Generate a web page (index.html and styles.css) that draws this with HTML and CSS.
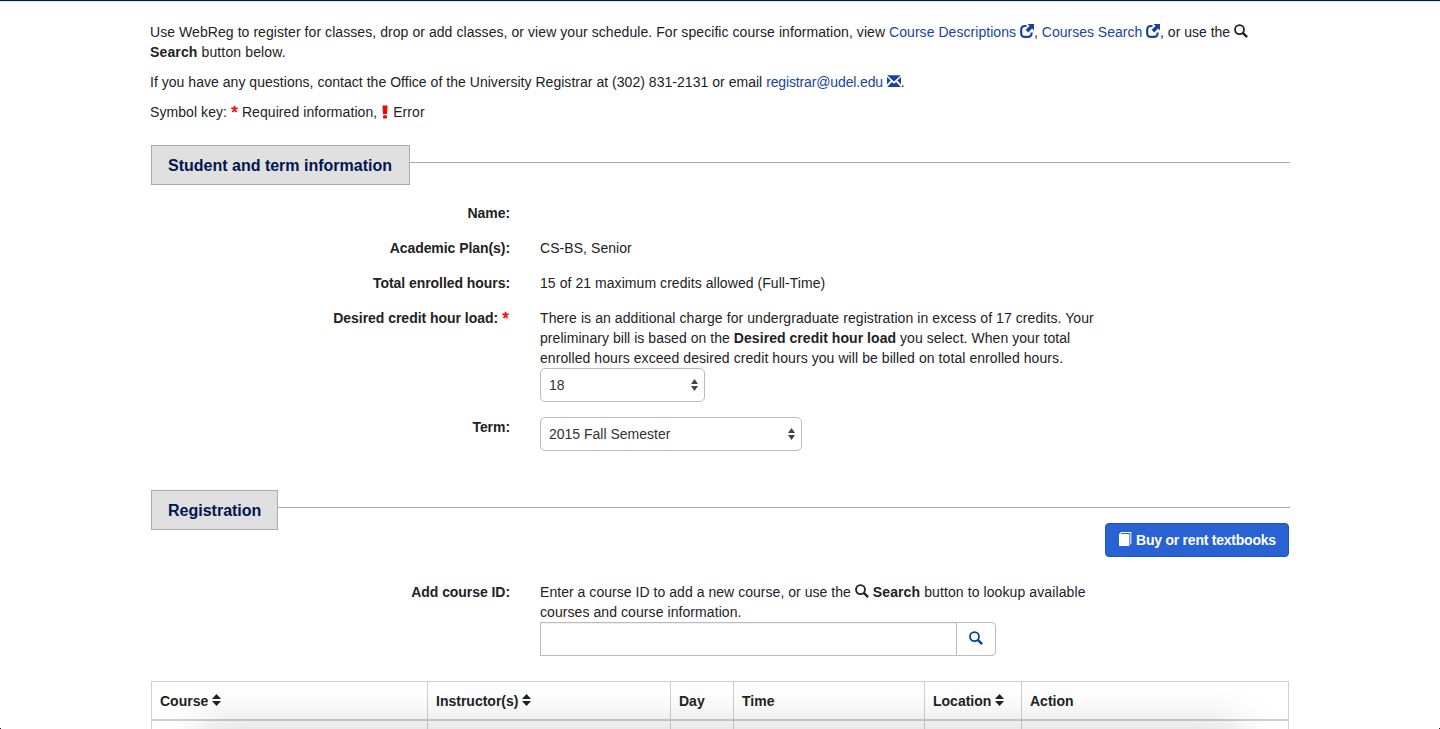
FILE: index.html
```html
<!DOCTYPE html>
<html lang="en">
<head>
<meta charset="utf-8">
<title>WebReg</title>
<link rel="stylesheet" href="styles.css">
</head>
<body>
<svg class="defs" aria-hidden="true">
  <symbol id="search" viewBox="0 0 14 14"><circle cx="5.5" cy="5.6" r="4.5" fill="none" stroke="currentColor" stroke-width="1.8"/><path d="M8.8 8.9l4.3 4.2" stroke="currentColor" stroke-width="2.4"/></symbol>
  <symbol id="external" viewBox="0 0 14 14"><path d="M6.500 2H5Q1.200 2 1.200 5.800V9.200Q1.200 12.900 5 12.900H7.900Q11.600 12.900 11.600 9.300V8.600" fill="none" stroke="currentColor" stroke-width="2.200"/><path d="M7.600 0H14v6.400l-1.900-1.900-3.900 3.900-2.600-2.600 3.900-3.900z" fill="currentColor"/></symbol>
  <symbol id="mail" viewBox="0 0 14 14"><path d="M.2 1.300h13.600L7 7.400zM0 2.900l3.700 3.700L0 10.600zM14 2.900l-3.700 3.700 3.700 4zM4.900 8l2.100 1.800L9.100 8l4.700 5H.2z" fill="currentColor"/></symbol>
  <symbol id="star" viewBox="0 0 8 8"><path d="M4 .2v4M.4 2.900L4 4.100l3.600-1.200M1.800 7.300L4 4.100l2.200 3.200" fill="none" stroke="currentColor" stroke-width="2"/></symbol>
  <symbol id="bang" viewBox="0 0 6 14"><path d="M.5.5h5L5 9H1z" fill="currentColor"/><rect x="1" y="10.300" width="4" height="3.200" rx="1" fill="currentColor"/></symbol>
  <symbol id="book" viewBox="0 0 14 14"><path d="M1 2.300L3 .1h10.300v11.600l-1 1V1.100H3.600L2.700 2H11.300v12H1z" fill="currentColor"/></symbol>
  <symbol id="sort" viewBox="0 0 9 12" preserveAspectRatio="none"><path d="M4.500 0L9 5H0zM0 7h9l-4.500 5z" fill="currentColor"/></symbol>
</svg>
<main class="page">
  <section class="intro">
    <p><span class="line"><span class="t1">Use WebReg to register for classes, drop or add classes, or view your schedule. For specific course information, view </span><a class="t2">Course Descriptions <svg class="icon"><use href="#external"/></svg></a>, <a>Courses Search <svg class="icon"><use href="#external"/></svg></a>, or use the <svg class="icon"><use href="#search"/></svg></span>
    <span class="line t5"><b>Search</b> button below.</span></p>
    <p class="line"><span class="t6">If you have any questions, contact the Office of the University Registrar at (302) 831-2131 or email </span><a class="t7">registrar@udel.edu <svg class="icon"><use href="#mail"/></svg></a>.</p>
    <p class="line t8">Symbol key: <svg class="star"><use href="#star"/></svg> Required information, <svg class="bang"><use href="#bang"/></svg> Error</p>
  </section>

  <section class="group">
    <h2 class="legend"><span class="tab tab-student">Student and term information</span></h2>
    <div class="rows">
      <div class="row"><b class="label">Name:</b><div></div></div>
      <div class="row"><b class="label">Academic Plan(s):</b><div class="line value">CS-BS, Senior</div></div>
      <div class="row"><b class="label">Total enrolled hours:</b><div class="line value">15 of 21 maximum credits allowed (Full-Time)</div></div>
      <div class="row"><b class="label label-required">Desired credit hour load: <svg class="star"><use href="#star"/></svg></b>
        <div>
          <span class="line d1">There is an additional charge for undergraduate registration in excess of 17 credits. Your</span>
          <span class="line d2">preliminary bill is based on the <b>Desired credit hour load</b> you select. When your total</span>
          <span class="line d1">enrolled hours exceed desired credit hours you will be billed on total enrolled hours.</span>
          <div class="select select-hours"><span>18</span><svg class="updown"><use href="#sort"/></svg></div>
        </div>
      </div>
      <div class="row"><b class="label">Term:</b><div><div class="select select-term"><span>2015 Fall Semester</span><svg class="updown"><use href="#sort"/></svg></div></div></div>
    </div>
  </section>

  <section class="group registration">
    <h2 class="legend"><span class="tab tab-registration">Registration</span></h2>
    <div class="actions"><button class="buy"><svg class="icon"><use href="#book"/></svg><span>Buy or rent textbooks</span></button></div>
    <div class="row"><b class="label">Add course ID:</b>
      <div>
        <span class="line e1">Enter a course ID to add a new course, or use the <svg class="icon"><use href="#search"/></svg><span class="e1-end"> <b>Search</b> button to lookup available</span></span>
        <span class="line d1">courses and course information.</span>
        <div class="lookup"><input class="lookup-input" aria-label="Course ID"><button class="lookup-button" aria-label="Search"><svg class="icon"><use href="#search"/></svg></button></div>
      </div>
    </div>
    <div class="table">
      <div class="cell">Course<svg class="sort"><use href="#sort"/></svg></div>
      <div class="cell">Instructor(s)<svg class="sort"><use href="#sort"/></svg></div>
      <div class="cell">Day</div>
      <div class="cell">Time</div>
      <div class="cell">Location<svg class="sort"><use href="#sort"/></svg></div>
      <div class="cell">Action</div>
    </div>
    <div class="table body-row"><i class="cell"></i><i class="cell"></i><i class="cell"></i><i class="cell"></i><i class="cell"></i><i class="cell"></i></div>
  </section>
</main>
<div class="shade"></div>
<i class="corner corner-left"></i><i class="corner corner-right"></i>
</body>
</html>
```
FILE: styles.css
```css
* { box-sizing: border-box; }
body {
  margin: 0;
  height: 729px;
  overflow: hidden;
  border-top: 1px solid #00164f;
  background: #fff;
  box-shadow: inset 0 1px #dfe1ee;
  color: #222;
  font: 14px/20px "Liberation Sans", Arial, sans-serif;
}
.defs { position: absolute; width: 0; height: 0; }
.page { width: 1140px; margin: 0 auto; padding-top: 21px; }
.line { display: block; white-space: nowrap; }
p { margin: 0 0 10px; }
a { color: #17459c; }
.icon { width: 14px; height: 14px; vertical-align: -1px; }
.star { width: 7px; height: 8px; vertical-align: 4.5px; color: #f00; }
.bang { width: 6px; height: 14px; vertical-align: -2px; color: #f00; margin: 0 1px; }

.t1 { letter-spacing: .067px; }
.t2 { letter-spacing: .05px; }
.t5 { letter-spacing: .13px; }
.t6 { letter-spacing: .032px; }
.t7 { letter-spacing: -.14px; }
.t8 { letter-spacing: .07px; }
.value { letter-spacing: .06px; }
.d1 { letter-spacing: .074px; }
.d2 { letter-spacing: .05px; }
.e1 { letter-spacing: .04px; }
.e1-end { letter-spacing: .1px; }

.legend {
  display: flex;
  margin: 23px 0 18px 1px;
  height: 40px;
  font-size: 16px;
  line-height: 38px;
  color: #00164f;
}
.legend::after { content: ""; flex: 1; height: 1px; margin-top: 17px; background: #aaa; }
.tab { border: 1px solid #aaa; background: #e0e0e0; padding: 1px 0 0 16px; white-space: nowrap; }
.tab-student { width: 259px; }
.tab-registration { width: 127px; }

.rows { display: grid; gap: 15px; }
.row { display: grid; grid-template-columns: 360px 570px; column-gap: 30px; min-height: 20px; }
.label { text-align: right; white-space: nowrap; letter-spacing: -.06px; }
.label-required { letter-spacing: -.03px; padding-right: 1px; }
.select {
  display: flex;
  align-items: center;
  justify-content: space-between;
  height: 34px;
  padding: 0 6px 0 8px;
  border: 1px solid #bbb;
  border-radius: 5px;
  color: #333;
}
.select-hours { width: 165px; }
.select-term { width: 262px; }
.updown { width: 7px; height: 12px; color: #444; }

.registration .legend { margin-top: 39px; margin-bottom: 0; }
.actions { display: flex; justify-content: flex-end; margin: -7px 1px 25px 0; }
.buy {
  display: flex;
  align-items: center;
  gap: 4px;
  width: 184px;
  height: 34px;
  padding: 0 0 0 12px;
  border: 1px solid #1b55c0;
  border-radius: 4px;
  background: #2962d3;
  color: #fff;
  font: bold 14px/20px "Liberation Sans", Arial, sans-serif;
  letter-spacing: -.23px;
  white-space: nowrap;
}
.buy .icon { margin-bottom: 2px; }
.lookup { display: flex; width: 456px; height: 34px; }
.lookup-input { width: 416px; border: 1px solid #bbb; border-right: 0; box-shadow: inset 0 1px 1px #0001; }
.lookup-button {
  width: 40px;
  padding: 0;
  border: 1px solid #bbb;
  border-radius: 0 4px 4px 0;
  background: #fff;
  color: #004494;
}
.table {
  display: grid;
  grid-template-columns: 276px 243px 63px 191px 97px 268px;
  width: 1138px;
  height: 40px;
  margin: 25px 0 0 1px;
  border-top: 1px solid #d0d0d0;
  border-bottom: 2px solid #d0d0d0;
  font-weight: bold;
}
.cell { padding: 9px 8px; border-left: 1px solid #d0d0d0; white-space: nowrap; }
.cell:last-child { border-right: 1px solid #d0d0d0; }
.body-row { height: 8px; margin-top: 0; border-top: 0; border-bottom: 0; }
.body-row .cell { padding: 0; }
.sort { width: 9px; height: 12px; margin-left: 4px; vertical-align: 0; }
/* Soft shadow rising from the lower edge of the window */
.shade {
  position: fixed;
  left: 205px;
  right: 205px;
  bottom: -20px;
  height: 20px;
  box-shadow: 0 0 38px 7px rgba(0, 0, 0, .15);
  pointer-events: none;
}
.corner { position: fixed; bottom: 0; width: 1px; height: 1px; background: #1c2626; }
.corner-left { left: 0; }
.corner-right { right: 0; }
```
